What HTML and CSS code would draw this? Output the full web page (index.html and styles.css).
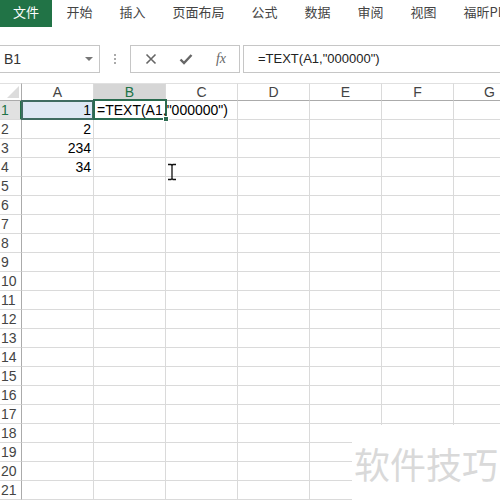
FILE: index.html
```html
<!DOCTYPE html>
<html>
<head>
<meta charset="utf-8">
<link rel="stylesheet" href="styles.css">
</head>
<body>
<div class="app">
  <div class="tabs">
    <div class="tab file">文件</div>
    <div class="tab">开始</div>
    <div class="tab">插入</div>
    <div class="tab">页面布局</div>
    <div class="tab">公式</div>
    <div class="tab">数据</div>
    <div class="tab">审阅</div>
    <div class="tab">视图</div>
    <div class="tab">福昕PDF</div>
  </div>
  <div class="fbar">
    <div class="namebox"><span>B1</span><span class="arrow"></span></div>
    <div class="dots"><i></i><i></i><i></i></div>
    <div class="btns">
      <svg width="12" height="12" viewBox="0 0 12 12"><path d="M1.5 1.5L10.5 10.5M10.5 1.5L1.5 10.5" stroke="#666" stroke-width="1.6" fill="none"/></svg>
      <svg width="14" height="12" viewBox="0 0 14 12"><path d="M1.5 6.5L5 10L12.5 2" stroke="#666" stroke-width="2.4" fill="none"/></svg>
      <span class="fx">fx</span>
    </div>
    <div class="input">=TEXT(A1,"000000")</div>
  </div>
  <div class="sheet">
    <div class="c rh corner"><span class="tri"></span></div><div class="c ch">A</div><div class="c ch sel">B</div><div class="c ch">C</div><div class="c ch">D</div><div class="c ch">E</div><div class="c ch">F</div><div class="c ch">G</div>
    <div class="c rh rsel">1</div><div class="c num a1">1</div><div class="c b1"><span class="txt">=TEXT(A1,"000000")</span></div><div class="c"></div><div class="c"></div><div class="c"></div><div class="c"></div><div class="c"></div>
    <div class="c rh">2</div><div class="c num">2</div><div class="c"></div><div class="c"></div><div class="c"></div><div class="c"></div><div class="c"></div><div class="c"></div>
    <div class="c rh">3</div><div class="c num">234</div><div class="c"></div><div class="c"></div><div class="c"></div><div class="c"></div><div class="c"></div><div class="c"></div>
    <div class="c rh">4</div><div class="c num">34</div><div class="c"></div><div class="c"></div><div class="c"></div><div class="c"></div><div class="c"></div><div class="c"></div>
    <div class="c rh">5</div><div class="c"></div><div class="c"></div><div class="c"></div><div class="c"></div><div class="c"></div><div class="c"></div><div class="c"></div>
    <div class="c rh">6</div><div class="c"></div><div class="c"></div><div class="c"></div><div class="c"></div><div class="c"></div><div class="c"></div><div class="c"></div>
    <div class="c rh">7</div><div class="c"></div><div class="c"></div><div class="c"></div><div class="c"></div><div class="c"></div><div class="c"></div><div class="c"></div>
    <div class="c rh">8</div><div class="c"></div><div class="c"></div><div class="c"></div><div class="c"></div><div class="c"></div><div class="c"></div><div class="c"></div>
    <div class="c rh">9</div><div class="c"></div><div class="c"></div><div class="c"></div><div class="c"></div><div class="c"></div><div class="c"></div><div class="c"></div>
    <div class="c rh">10</div><div class="c"></div><div class="c"></div><div class="c"></div><div class="c"></div><div class="c"></div><div class="c"></div><div class="c"></div>
    <div class="c rh">11</div><div class="c"></div><div class="c"></div><div class="c"></div><div class="c"></div><div class="c"></div><div class="c"></div><div class="c"></div>
    <div class="c rh">12</div><div class="c"></div><div class="c"></div><div class="c"></div><div class="c"></div><div class="c"></div><div class="c"></div><div class="c"></div>
    <div class="c rh">13</div><div class="c"></div><div class="c"></div><div class="c"></div><div class="c"></div><div class="c"></div><div class="c"></div><div class="c"></div>
    <div class="c rh">14</div><div class="c"></div><div class="c"></div><div class="c"></div><div class="c"></div><div class="c"></div><div class="c"></div><div class="c"></div>
    <div class="c rh">15</div><div class="c"></div><div class="c"></div><div class="c"></div><div class="c"></div><div class="c"></div><div class="c"></div><div class="c"></div>
    <div class="c rh">16</div><div class="c"></div><div class="c"></div><div class="c"></div><div class="c"></div><div class="c"></div><div class="c"></div><div class="c"></div>
    <div class="c rh">17</div><div class="c"></div><div class="c"></div><div class="c"></div><div class="c"></div><div class="c"></div><div class="c"></div><div class="c"></div>
    <div class="c rh">18</div><div class="c"></div><div class="c"></div><div class="c"></div><div class="c"></div><div class="c"></div><div class="c"></div><div class="c"></div>
    <div class="c rh">19</div><div class="c"></div><div class="c"></div><div class="c"></div><div class="c"></div><div class="c"></div><div class="c"></div><div class="c"></div>
    <div class="c rh">20</div><div class="c"></div><div class="c"></div><div class="c"></div><div class="c"></div><div class="c"></div><div class="c"></div><div class="c"></div>
    <div class="c rh">21</div><div class="c"></div><div class="c"></div><div class="c"></div><div class="c"></div><div class="c"></div><div class="c"></div><div class="c"></div>
  </div>
  <svg class="ibeam" width="10" height="18" viewBox="0 0 10 18"><path d="M1 1.5H4L5 2.5L6 1.5H9M5 2.5V15.5M1 16.5H4L5 15.5L6 16.5H9" stroke="#111" stroke-width="1.3" fill="none"/></svg>
  <div class="watermark">软件技巧</div>
</div>
</body>
</html>
```
FILE: styles.css
```css
html, body { margin: 0; padding: 0; background: #fff; }
body { width: 500px; height: 500px; overflow: hidden; font-family: "Liberation Sans", "Noto Sans CJK SC", sans-serif; }
.app { position: relative; width: 500px; height: 500px; overflow: hidden; }

.tabs { display: flex; height: 27px; align-items: stretch; white-space: nowrap; }
.tab { flex-shrink: 0; font-family: "Noto Sans CJK SC", sans-serif; font-size: 13px; color: #444; padding: 0 13.5px; line-height: 24px; }
.tab.file { width: 52px; padding: 0; box-sizing: border-box; background: #217346; color: #fff; text-align: center; margin-right: 1px; }

.fbar { display: flex; height: 28px; margin-top: 18px; align-items: stretch; }
.namebox { width: 100px; box-sizing: border-box; border: 1px solid #c6c6c6; border-left: none; display: flex; align-items: center; justify-content: space-between; padding: 0 6px 0 4px; font-size: 14px; color: #333; }
.arrow { width: 0; height: 0; border-left: 4px solid transparent; border-right: 4px solid transparent; border-top: 4px solid #777; }
.dots { width: 30px; display: flex; flex-direction: column; align-items: center; justify-content: center; gap: 2px; }
.dots i { display: block; width: 2px; height: 2px; background: #aaa; }
.btns { width: 110px; box-sizing: border-box; border: 1px solid #c6c6c6; display: flex; align-items: center; justify-content: space-between; padding: 0 13px 0 14px; }
.fx { font-family: "Liberation Serif", serif; font-style: italic; font-size: 14px; color: #666; }
.input { flex: 1; margin-left: 3px; box-sizing: border-box; border: 1px solid #c6c6c6; border-right: none; font-size: 13px; color: #222; padding-left: 14px; line-height: 26px; }

.sheet { display: grid; grid-template-columns: 22px repeat(7, 72px); grid-template-rows: 18px; grid-auto-rows: 19px; margin-top: 10px; width: 526px; }
.c { box-sizing: border-box; border-right: 1px solid #dadada; border-bottom: 1px solid #dadada; font-size: 14px; color: #000; white-space: nowrap; line-height: 18px; position: relative; }
.rh { border-right: 1px solid #ababab; color: #444; font-size: 14px; padding-left: 1px; }
.ch { border-bottom: 1px solid #ababab; border-top: 1px solid #e0e0e0; text-align: center; color: #444; line-height: 17px; }
.corner { border-bottom: 1px solid #ababab; border-top: 1px solid #e0e0e0; }
.tri { position: absolute; right: 2px; bottom: 2px; width: 0; height: 0; border-left: 12px solid transparent; border-bottom: 12px solid #dcdcdc; }
.ch.sel { background: #d6d6d6; border-bottom: 2px solid #217346; color: #217346; }
.rh.rsel { background: #e1e1e1; border-right: 2px solid #217346; color: #217346; }
.num { text-align: right; padding-right: 2px; }
.a1 { background: #dde8f4; }
.a1::before { content: ""; position: absolute; left: -1px; top: -1px; right: -1px; bottom: -1px; border: 2px solid #3f6c62; }
.b1 { border-right: none; overflow: visible; z-index: 2; }
.b1::before { content: ""; position: absolute; left: -1px; top: -2px; right: -1px; bottom: -1px; border: 2px solid #2b6b50; }
.b1::after { content: ""; position: absolute; right: -3px; bottom: -3px; width: 4px; height: 4px; background: #2b6b50; border: 1px solid #fff; }
.txt { position: relative; padding-left: 3px; }

.ibeam { position: absolute; left: 167px; top: 163px; }
.watermark { position: absolute; left: 352px; top: 425px; width: 148px; height: 75px; background: #fff; font-family: "Noto Sans CJK SC", sans-serif; font-size: 36px; color: #d9d9d9; display: flex; align-items: center; justify-content: center; letter-spacing: 0px; }
```
